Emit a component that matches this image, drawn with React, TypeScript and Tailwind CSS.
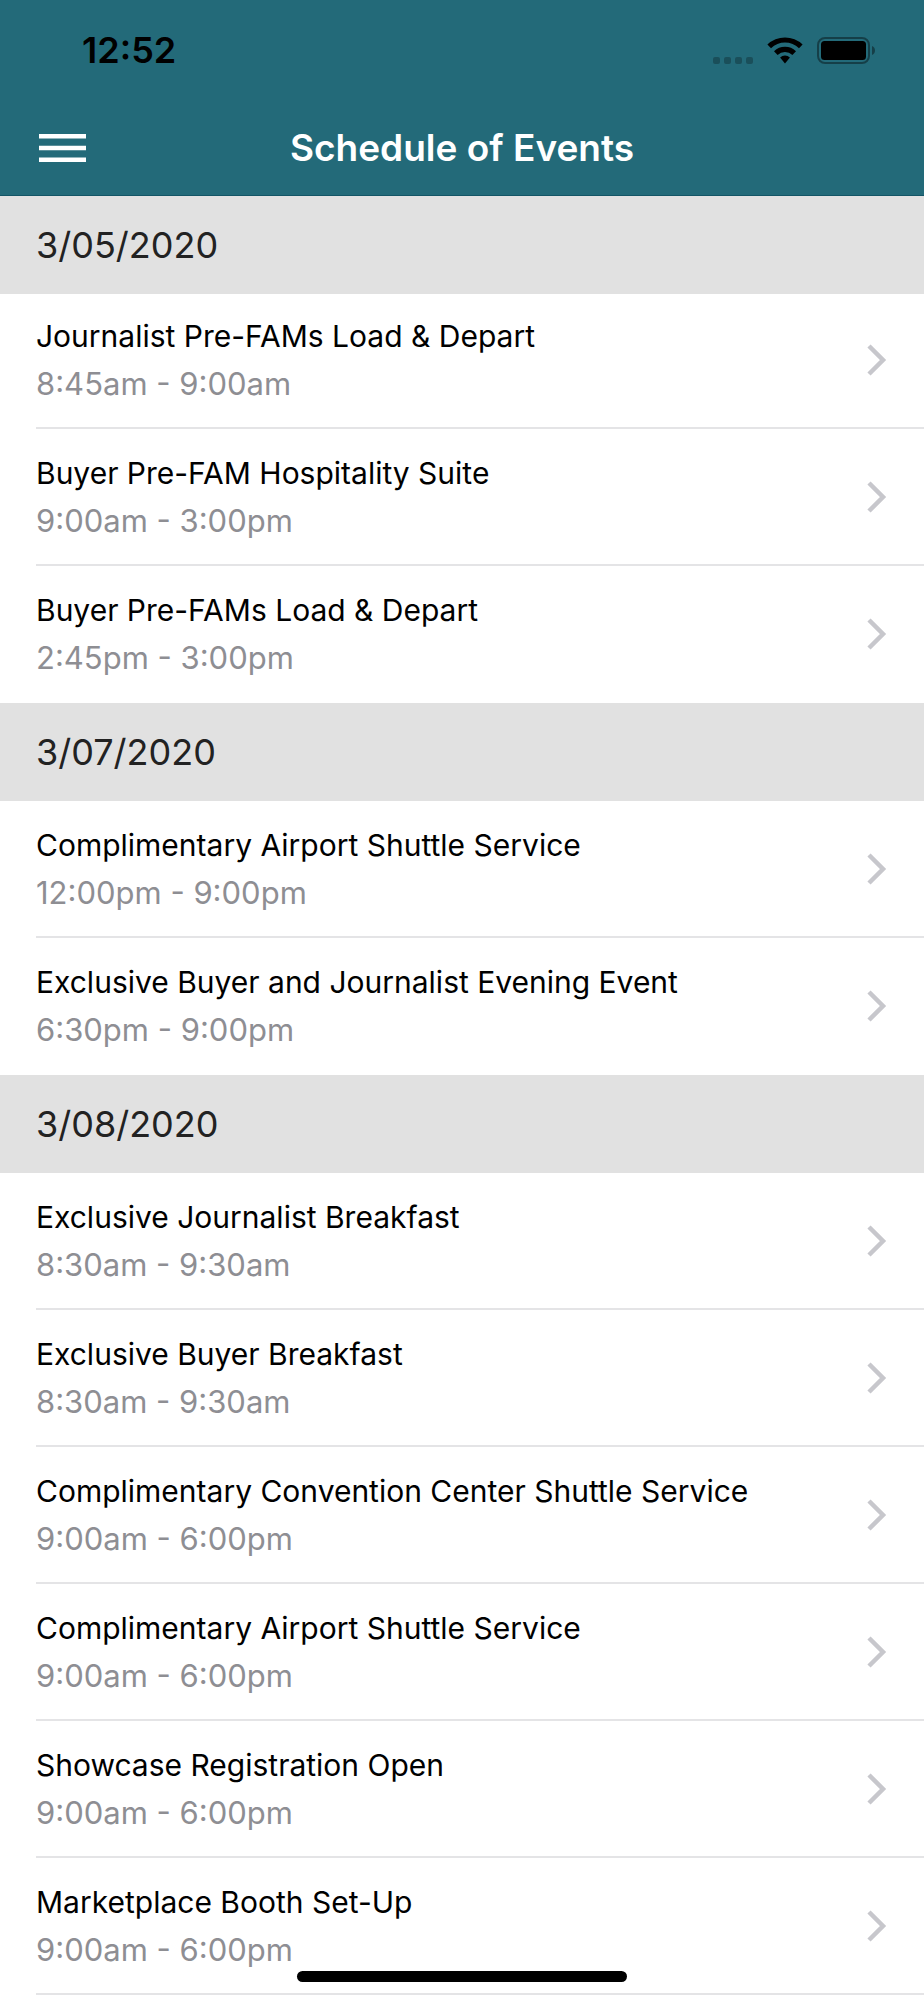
type ScheduleEvent = { title: string; time: string }
type Day = { date: string; events: ScheduleEvent[] }

const days: Day[] = [
  {
    date: "3/05/2020",
    events: [
      { title: "Journalist Pre-FAMs Load & Depart", time: "8:45am - 9:00am" },
      { title: "Buyer Pre-FAM Hospitality Suite", time: "9:00am - 3:00pm" },
      { title: "Buyer Pre-FAMs Load & Depart", time: "2:45pm - 3:00pm" },
    ],
  },
  {
    date: "3/07/2020",
    events: [
      { title: "Complimentary Airport Shuttle Service", time: "12:00pm - 9:00pm" },
      { title: "Exclusive Buyer and Journalist Evening Event", time: "6:30pm - 9:00pm" },
    ],
  },
  {
    date: "3/08/2020",
    events: [
      { title: "Exclusive Journalist Breakfast", time: "8:30am - 9:30am" },
      { title: "Exclusive Buyer Breakfast", time: "8:30am - 9:30am" },
      { title: "Complimentary Convention Center Shuttle Service", time: "9:00am - 6:00pm" },
      { title: "Complimentary Airport Shuttle Service", time: "9:00am - 6:00pm" },
      { title: "Showcase Registration Open", time: "9:00am - 6:00pm" },
      { title: "Marketplace Booth Set-Up", time: "9:00am - 6:00pm" },
    ],
  },
]

function WifiIcon() {
  return (
    <svg width="36" height="27" viewBox="0 0 36 27" aria-hidden="true">
      <path d="M0.4 7.6A25.2 25.2 0 0 1 35.6 7.6L32 11.2A20.2 20.2 0 0 0 4 11.2Z" />
      <path d="M7 14.3A15.8 15.8 0 0 1 29 14.3L25.4 18A10.6 10.6 0 0 0 10.6 18Z" />
      <path d="M13.1 20.6A7 7 0 0 1 22.9 20.6L18 26.5Z" strokeLinejoin="round" />
    </svg>
  )
}

function BatteryIcon() {
  return (
    <svg width="60" height="27" viewBox="0 0 60 27" aria-hidden="true">
      <rect x="1" y="1" width="51" height="25" rx="7" fill="none" stroke="#000" strokeOpacity="0.4" strokeWidth="2" />
      <rect x="4" y="4" width="45" height="19" rx="3.5" />
      <path d="M55 9C59 10.5 59 16.5 55 18Z" fillOpacity="0.4" />
    </svg>
  )
}

function StatusBar() {
  return (
    <div className="flex h-[100px] items-center justify-between pl-[82px] pr-[47px] text-black">
      <span className="text-[36px] font-semibold leading-10">12:52</span>
      <div className="flex items-center">
        <div className="mr-3.5 flex gap-1 self-end">
          <span className="size-[7px] rounded-xs bg-black/25" />
          <span className="size-[7px] rounded-xs bg-black/25" />
          <span className="size-[7px] rounded-xs bg-black/25" />
          <span className="size-[7px] rounded-xs bg-black/25" />
        </div>
        <div className="mr-3.5">
          <WifiIcon />
        </div>
        <BatteryIcon />
      </div>
    </div>
  )
}

function EventRow({ title, time }: ScheduleEvent) {
  return (
    <li className="group/row pl-9">
      <a
        href="#"
        className="flex h-[137px] items-center justify-between border-b-2 border-[#e4e4e6] pr-9 group-not-last/day:group-last/row:border-transparent"
      >
        <div className="leading-[47px]">
          <p className="text-[30px] text-black">{title}</p>
          <p className="text-[31px] text-[#8e8e93]">{time}</p>
        </div>
        <svg width="22" height="34" viewBox="0 0 22 34" fill="none" aria-hidden="true">
          <path d="M3 3L17 17L3 31" stroke="#c7c7cc" strokeWidth="4.5" />
        </svg>
      </a>
    </li>
  )
}

export default function App() {
  return (
    <div className="min-h-screen bg-white font-['Inter',sans-serif]">
      <header className="border-b border-[#135566] bg-[#236a79]">
        <StatusBar />
        <div className="grid h-[95px] grid-cols-[1fr_auto_1fr] items-center px-9">
          <button type="button" aria-label="Menu" className="w-fit px-[3px]">
            <svg width="47" height="28" viewBox="0 0 47 28" fill="#fff" aria-hidden="true">
              <rect width="47" height="4.5" />
              <rect y="11.75" width="47" height="4.5" />
              <rect y="23.5" width="47" height="4.5" />
            </svg>
          </button>
          <h1 className="text-[37px] font-semibold leading-[46px] text-white">Schedule of Events</h1>
        </div>
      </header>

      <main>
        {days.map((day) => (
          <section key={day.date} className="group/day">
            <h2 className="flex h-[98px] items-center bg-[#e1e1e1] px-9 text-[36px] text-[#222]">
              {day.date}
            </h2>
            <ul className="group-first/day:-mt-0.5">
              {day.events.map((event) => (
                <EventRow key={event.title} {...event} />
              ))}
            </ul>
          </section>
        ))}
      </main>

      <div className="fixed inset-x-0 bottom-[18px] flex justify-center">
        <div className="h-[11px] w-[330px] rounded-full bg-black" />
      </div>
    </div>
  )
}
